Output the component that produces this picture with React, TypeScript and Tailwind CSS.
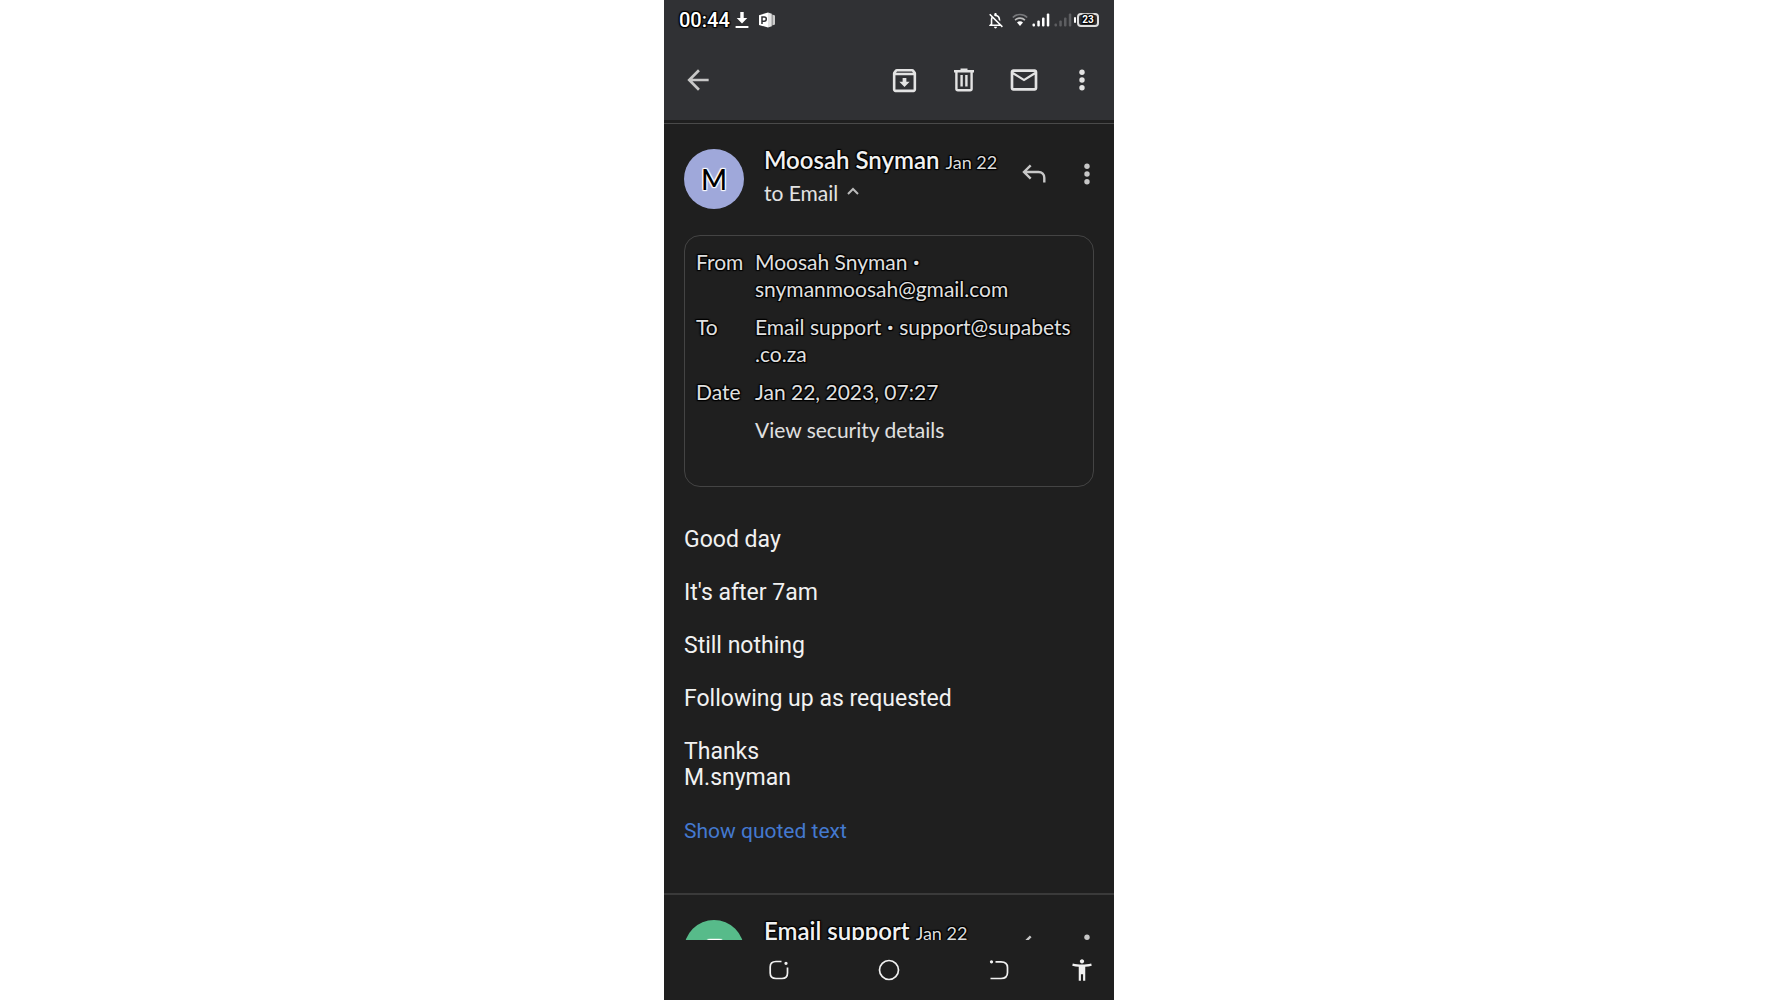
import React from "react";
import { MdAccessibilityNew, MdArrowBack, MdOutlineArchive, MdOutlineMail, MdOutlineNotificationsOff } from "react-icons/md";

const outline =
  "[text-shadow:0_0_2px_#000,1px_1px_1px_#000,-1px_-1px_1px_#000,1px_-1px_1px_#000,-1px_1px_1px_#000]";

const MoreIcon = () => (
  <svg viewBox="0 0 6 22" className="h-[22px] w-[6px]" fill="currentColor">
    <circle cx="3" cy="3.2" r="2.7" />
    <circle cx="3" cy="11" r="2.7" />
    <circle cx="3" cy="18.8" r="2.7" />
  </svg>
);

const TrashIcon = () => (
  <svg viewBox="0 0 22 24" className="h-6 w-[22px]" fill="none" stroke="currentColor" strokeWidth="2.4">
    <path d="M1 3.2h20M7.5 1.8h7" />
    <path d="M3.4 3.5v17.3c0 .9.6 1.5 1.5 1.5h12.2c.9 0 1.5-.6 1.5-1.5V3.5M8.6 7v11.5M13.4 7v11.5" />
  </svg>
);

const ReplyIcon = () => (
  <svg viewBox="0 0 24 20" className="h-5 w-6" fill="none" stroke="currentColor" strokeWidth="2.4">
    <path d="M8.7 1.4 2 8l6.7 6.6M2 8h14.5c3.5 0 5.8 2.3 5.8 5.8v4.7" />
  </svg>
);

const SignalIcon = () => (
  <svg viewBox="0 0 18 14" className="h-[14px] w-[18px]" fill="currentColor">
    <rect x="0.5" y="10.5" width="2.5" height="3" rx="1" />
    <rect x="5.3" y="7.5" width="2.5" height="6" rx="1" />
    <rect x="10" y="4.5" width="2.5" height="9" rx="1" />
    <rect x="14.8" y="0.5" width="2.5" height="13" rx="1" />
  </svg>
);

const StatusBar = () => (
  <div className="flex h-10 items-center justify-between px-[15px] text-white">
    <div className="flex items-center">
      <span className={`text-xl font-medium ${outline}`}>00:44</span>
      <svg viewBox="0 0 14 18" className="ml-[5px] h-[18px] w-[14px]" fill="currentColor">
        <path d="M5.3 1h3.4v6h3.6L7 12.5 1.7 7h3.6zM.6 15h12.8v1.9H.6z" />
      </svg>
      <svg viewBox="0 0 18 16" className="ml-[9px] h-4 w-[18px]">
        <path d="M1 3.2 10 .5v15L1 13z" fill="#fff" />
        <path d="M10 .5l3.800 1.300v12.400L10 15.500z" fill="#e4e4e4" />
        <path d="M14.300 2.500 17 3.500v9l-2.700 1z" fill="#ccc" />
        <path d="M4 12V5h2.200a2 2 0 0 1 0 4.200H4" fill="none" stroke="#303134" strokeWidth="1.5" />
      </svg>
    </div>
    <div className="flex items-center">
      <MdOutlineNotificationsOff className="size-[19px]" />
      <svg viewBox="0 0 16 14" className="ml-[7px] h-[14px] w-4" fill="none" strokeWidth="1.7">
        <path d="M.8 4.500a10.200 10.200 0 0 1 14.400 0" stroke="#77787b" />
        <path d="M3.100 7.200a7 7 0 0 1 9.800 0" stroke="#bbb" />
        <path d="M5 9.500a4.200 4.200 0 0 1 6 0L8 13z" fill="#fff" />
      </svg>
      <span className="ml-1 flex gap-1">
        <SignalIcon />
        <span className="text-[#5d5e61]">
          <SignalIcon />
        </span>
      </span>
      <span className="ml-[2px] h-[6px] w-[2px] rounded-full bg-white" />
      <span className={`ml-px flex h-[14px] w-[22px] items-center justify-center rounded-[4px] border-2 border-[#ddd] text-[10px] leading-none font-bold ${outline}`}>
        23
      </span>
    </div>
  </div>
);

const Toolbar = () => (
  <div className="flex h-20 items-center justify-between pl-[18px] pr-[29px] text-[#e3e3e3]">
    <button aria-label="Back" className="text-[#c7c7c7]">
      <MdArrowBack className="size-8" />
    </button>
    <div className="flex items-center">
      <button aria-label="Archive">
        <MdOutlineArchive className="size-[31px]" />
      </button>
      <button aria-label="Delete" className="ml-[33px]">
        <TrashIcon />
      </button>
      <button aria-label="Mark as unread" className="ml-[33px]">
        <MdOutlineMail className="size-8" />
      </button>
      <button aria-label="More options" className="ml-[39px]">
        <MoreIcon />
      </button>
    </div>
  </div>
);

type MessageHeaderProps = {
  name: string;
  initial: string;
  date: string;
  to?: string;
  color: string;
};

const MessageHeader = ({ name, initial, date, to, color }: MessageHeaderProps) => (
  <div className="flex items-start px-5 pt-[25px]">
    <div
      className={`flex size-[60px] shrink-0 items-center justify-center rounded-full text-[28px] font-medium text-black [text-shadow:0_0_2px_#fff,1px_1px_1px_#fff,-1px_-1px_1px_#fff,1px_-1px_1px_#fff,-1px_1px_1px_#fff] ${color}`}
    >
      {initial}
    </div>
    <div className={`-mt-[3px] ml-5 min-w-0 flex-1 ${outline}`}>
      <div className="flex items-baseline gap-[6px] whitespace-nowrap">
        <h2 className="text-2xl leading-7 font-semibold text-[#f1f1f1]">{name}</h2>
        <span className="text-lg leading-7 text-[#dcdcdc]">{date}</span>
      </div>
      {to && (
        <button className="mt-[3px] flex items-center gap-2 text-[21px] leading-7 text-[#e3e3e3]">
          {to}
          <svg viewBox="0 0 14 8" className="-mt-1 h-2 w-[14px]" fill="none" stroke="#bbb" strokeWidth="2">
            <path d="M2 7l5-5 5 5" />
          </svg>
        </button>
      )}
    </div>
    <div className="flex items-center gap-[38px] pt-[14px] text-[#c7c7c7]">
      <button aria-label="Reply">
        <ReplyIcon />
      </button>
      <button aria-label="Message options" className="mr-1">
        <MoreIcon />
      </button>
    </div>
  </div>
);

const Bullet = () => <span className="font-[Roboto,sans-serif]">•</span>;

const DetailsCard = () => (
  <div className={`mx-5 mt-[26px] rounded-2xl border border-[#444] px-[11px] pt-[13px] pb-[43px] text-[21px] leading-[26px] text-[#e0e0e0] ${outline}`}>
    <dl className="flex flex-col gap-3">
      <div className="flex">
        <dt className="w-[59px] shrink-0">From</dt>
        <dd>
          Moosah Snyman <Bullet />
          <br />
          snymanmoosah@gmail.com
        </dd>
      </div>
      <div className="flex">
        <dt className="w-[59px] shrink-0">To</dt>
        <dd className="whitespace-nowrap">
          Email support <Bullet /> support@supabets
          <br />
          .co.za
        </dd>
      </div>
      <div className="flex">
        <dt className="w-[59px] shrink-0">Date</dt>
        <dd>Jan 22, 2023, 07:27</dd>
      </div>
    </dl>
    <button className="mt-3 ml-[59px] block">View security details</button>
  </div>
);

const MessageBody = () => (
  <div className="flex flex-col items-start gap-[27px] px-5 pt-10 pb-[49px] font-[Roboto,sans-serif] text-[23px] leading-[26px] text-[#f1f1f1]">
    <p>Good day</p>
    <p>It's after 7am</p>
    <p>Still nothing</p>
    <p>Following up as requested</p>
    <p>
      Thanks
      <br />
      M.snyman
    </p>
    <button className="text-[21px] text-[#4479cf]">Show quoted text</button>
  </div>
);

const NavBar = () => (
  <nav className="flex h-[60px] shrink-0 items-center text-[#f1f1f1]">
    <div className="flex flex-1 items-center justify-between pl-[105px]">
      <button aria-label="Recent apps">
        <svg viewBox="0 0 20 20" className="size-5" fill="none" stroke="currentColor" strokeWidth="1.7">
          <path d="M12.5 1.500H7C3.500 1.500 1.200 3.500 1.200 7v6c0 3.500 2.300 5.500 5.800 5.500h6c3.500 0 5.500-2 5.500-5.500V7.500" />
          <circle cx="17" cy="3.3" r="0.8" fill="currentColor" />
        </svg>
      </button>
      <button aria-label="Home">
        <svg viewBox="0 0 22 22" className="size-[22px]" fill="none" stroke="currentColor" strokeWidth="1.7">
          <circle cx="11" cy="11" r="9.5" />
        </svg>
      </button>
      <button aria-label="Back">
        <svg viewBox="0 0 20 20" className="size-5" fill="none" stroke="currentColor" strokeWidth="1.7">
          <path d="M6.500 1.800H12c4.500 0 6.500 2.300 6.500 5.700v5c0 3.500-2 6-6.500 6H1.500" />
          <circle cx="2.5" cy="1.8" r="0.8" fill="currentColor" />
        </svg>
      </button>
    </div>
    <button aria-label="Accessibility" className="mr-[19px] ml-[60px]">
      <MdAccessibilityNew className="size-[26px]" />
    </button>
  </nav>
);

export default function App() {
  return (
    <div className="flex h-screen justify-center bg-white">
      <div className="flex w-full max-w-[450px] flex-col bg-[#1f1f1f] font-[Roboto,sans-serif]">
        <header className="shrink-0 bg-[#303134]">
          <StatusBar />
          <Toolbar />
        </header>
        <main className="min-h-0 flex-1 overflow-hidden pt-[3px] font-[Lato,sans-serif]">
          <article className="border-t border-[#4a4a4a]">
            <MessageHeader name="Moosah Snyman" initial="M" date="Jan 22" to="to Email" color="bg-[#9fa8da]" />
            <DetailsCard />
            <MessageBody />
          </article>
          <article className="border-t-2 border-[#3a3a3a]">
            <MessageHeader name="Email support" initial="E" date="Jan 22" color="bg-[#57bb8a]" />
          </article>
        </main>
        <NavBar />
      </div>
    </div>
  );
}
